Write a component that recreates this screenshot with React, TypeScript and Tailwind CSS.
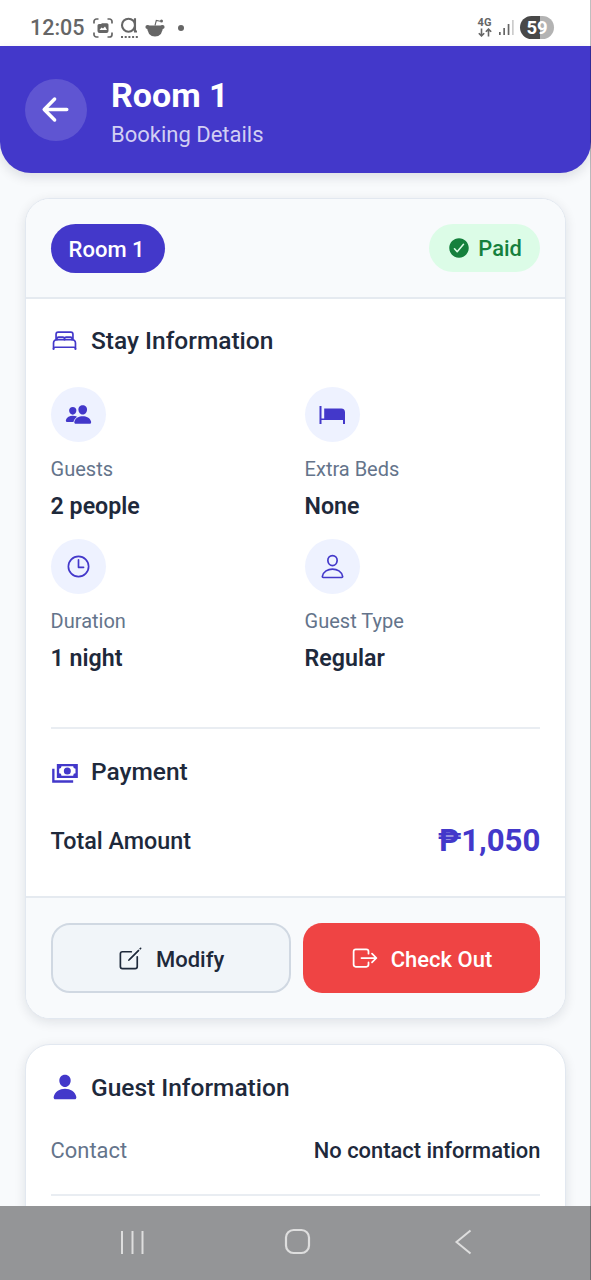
import type { ReactNode } from 'react';
import {
  IoArrowBack,
  IoBedOutline,
  IoCheckmarkCircle,
  IoCreateOutline,
  IoExitOutline,
  IoPeople,
  IoPerson,
  IoPersonOutline,
  IoTimeOutline,
} from 'react-icons/io5';

function BedIcon() {
  return (
    <svg width="28" height="28" viewBox="0 0 28 28" fill="currentColor">
      <path d="M1.5 5h2v12.500h21.500V11a2.800 2.800 0 0 1 2 2.800V23h-2v-4H3.500v4h-2z" />
      <path d="M6.200 7.500h17a3.800 3.800 0 0 1 3.800 3.800v6.700H6.200z" />
    </svg>
  );
}

function CashIcon() {
  return (
    <svg width="28" height="28" viewBox="0 0 24 24" fill="currentColor">
      <path d="M5 6h18v12H5V6m9 3a3 3 0 0 1 3 3 3 3 0 0 1-3 3 3 3 0 0 1-3-3 3 3 0 0 1 3-3M9 8a2 2 0 0 1-2 2v4a2 2 0 0 1 2 2h10a2 2 0 0 1 2-2v-4a2 2 0 0 1-2-2H9m-8 2h2v10h16v2H1V10z" />
    </svg>
  );
}

function StatusBar() {
  return (
    <div className="flex h-[46px] items-center bg-white pt-[9px] pr-[37px] pl-[30px] text-[#666]">
      <span className="w-[63px] text-[21.500px] leading-none font-medium whitespace-nowrap">12:05</span>
      <svg width="20" height="20" viewBox="0 0 20 20" fill="none" stroke="currentColor" strokeWidth="1.700">
        <path d="M1 5.500V3.500A2.500 2.500 0 0 1 3.500 1H5.500M14.500 1h2A2.500 2.500 0 0 1 19 3.500V5.500M19 14.500v2a2.500 2.500 0 0 1-2.500 2.500H14.500M5.500 19H3.500A2.500 2.500 0 0 1 1 16.500V14.500" />
        <path d="M4.500 7.500q0-1.500 1.500-1.500h2l1-.8h5q1.500 0 1.500 1.500v6.300q0 2-2 2h-7q-2 0-2-2z" fill="currentColor" stroke="none" />
        <path d="M6.500 12l2-2.500 1.500 1 2-2 2 3.500z" fill="#fff" stroke="none" />
      </svg>
      <svg className="ml-[7px]" width="19" height="22" viewBox="0 0 19 22" fill="none" stroke="currentColor" strokeWidth="2.100">
        <circle cx="8.500" cy="8.200" r="6.500" />
        <path d="M15 1.200v13.300h2" />
        <path d="M1 20h17" strokeDasharray="2 1.700" />
      </svg>
      <svg className="ml-[6px]" width="20" height="19" viewBox="0 0 20 19" fill="currentColor">
        <path d="M2 7.500h16q0 11-8 11T2 7.500z" />
        <circle cx="2.500" cy="9" r="2.100" />
        <circle cx="17.500" cy="9" r="2.100" />
        <circle cx="16.500" cy="3" r="1.500" />
        <path d="M10 7.500l1.300-5 4 .7" fill="none" stroke="currentColor" strokeWidth="1.100" />
      </svg>
      <span className="ml-[13px] h-[6px] w-[6px] rounded-full bg-[#666]" />

      <div className="ml-auto flex w-[15px] flex-col items-center">
        <span className="text-[11px] leading-[10px] font-bold">4G</span>
        <svg width="14" height="9" viewBox="0 0 14 9" fill="none" stroke="currentColor" strokeWidth="1.600">
          <path d="M3.500.5v7.300M.8 5.200l2.700 2.700 2.700-2.700M10.500 8.500V1.200M7.800 3.800l2.700-2.700 2.700 2.700" />
        </svg>
      </div>
      <svg className="ml-[7px]" width="15" height="17" viewBox="0 0 15 17" fill="currentColor">
        <path d="M0 13h1.700v3H0zM4.300 9H6v7H4.300zM8.700 5h1.700v11H8.700z" />
        <path d="M13 1h1.700v15H13z" fill="#ccc" />
      </svg>
      <span className="ml-[6px] flex h-[23px] w-[34px] items-center justify-center rounded-full bg-linear-to-r from-[#484848] from-[58%] to-[#b3b3b3] to-[58%] pt-px text-[18.500px] leading-none font-bold text-white">
        59
      </span>
    </div>
  );
}

function Header() {
  return (
    <header className="flex h-[127px] items-center rounded-b-[31px] bg-[#4338ca] pl-[24.600px] text-white shadow-[0_4px_12px_rgba(15,23,42,0.12)]">
      <button
        type="button"
        aria-label="Back"
        className="flex h-[62px] w-[62px] items-center justify-center rounded-full bg-white/15"
      >
        <IoArrowBack size={37} className="mr-[1px]" />
      </button>
      <div className="ml-[24.400px] pt-[9px]">
        <h1 className="text-[34px] leading-[42px] font-bold">Room 1</h1>
        <p className="h-[38px] text-[22px] leading-[37px] text-[#d2cff3]">Booking Details</p>
      </div>
    </header>
  );
}

function SectionTitle({ icon, children }: { icon: ReactNode; children: string }) {
  return (
    <h2 className="flex h-[30px] items-center text-[24.500px] leading-[30px] font-medium text-[#1e293b]">
      <span className="-mt-[2px] w-[40.400px] text-[#4338ca]">{icon}</span>
      {children}
    </h2>
  );
}

function Detail({ icon, label, value }: { icon: ReactNode; label: string; value: string }) {
  return (
    <div className="h-[152px]">
      <div className="flex h-[55px] w-[55px] items-center justify-center rounded-full bg-[#eef2ff] text-[#4338ca]">
        {icon}
      </div>
      <p className="mt-[12px] text-[20px] leading-[30px] text-[#64748b]">{label}</p>
      <p className="mt-[6px] text-[23.200px] leading-[32px] font-semibold text-[#1e293b]">{value}</p>
    </div>
  );
}

function BookingCard() {
  return (
    <section className="mx-[25px] mt-[25px] h-[821px] overflow-hidden rounded-[25px] border-[1.500px] border-[#e2e8f0] bg-white shadow-[0_3px_12px_rgba(15,23,42,0.11)]">
      <div className="flex h-[100px] items-center justify-between border-b-2 border-[#e5eaf0] bg-[#f8fafc] px-[24.600px]">
        <span className="flex h-[49px] w-[114px] items-center justify-center rounded-full bg-[#4338ca] pt-[2px] pr-[2px] text-[22px] font-medium text-white">
          Room 1
        </span>
        <span className="flex h-[48px] w-[111.500px] items-center justify-center gap-[7px] rounded-full bg-[#dcfce7] text-[21.900px] font-medium text-[#15803d]">
          <IoCheckmarkCircle size={24} />
          <span className="pt-[2px]">Paid</span>
        </span>
      </div>

      <div className="h-[599px] border-b-2 border-[#e5eaf0] px-[24.600px] pt-[27px]">
        <SectionTitle icon={<IoBedOutline size={27} />}>Stay Information</SectionTitle>
        <div className="mt-[31px] grid grid-cols-[254px_1fr]">
          <Detail icon={<IoPeople size={27} />} label="Guests" value="2 people" />
          <Detail icon={<BedIcon />} label="Extra Beds" value="None" />
          <Detail icon={<IoTimeOutline size={27} />} label="Duration" value="1 night" />
          <Detail icon={<IoPersonOutline size={27} />} label="Guest Type" value="Regular" />
        </div>
        <div className="mt-[36px] border-t-2 border-[#e9edf2] pt-[28px]">
          <SectionTitle icon={<CashIcon />}>Payment</SectionTitle>
          <div className="mt-[35px] flex h-[38px] items-center justify-between">
            <span className="text-[23.300px] font-medium text-[#1e293b]">Total Amount</span>
            <span className="pt-px text-[31.200px] font-bold text-[#4338ca]">₱1,050</span>
          </div>
        </div>
      </div>

      <div className="flex h-[120px] gap-[12px] bg-[#f8fafc] px-[24.600px] pt-[25px] text-[22px] font-medium">
        <button
          type="button"
          className="flex h-[70px] w-[240px] items-center justify-center gap-[12px] rounded-[19px] border-2 border-[#d0d8e2] bg-[#f1f5f9] text-[#1e293b]"
        >
          <IoCreateOutline size={27} />
          <span className="pt-[2px]">Modify</span>
        </button>
        <button
          type="button"
          className="flex h-[70px] flex-1 items-center justify-center gap-[12px] rounded-[19px] bg-[#ef4444] text-white"
        >
          <IoExitOutline size={28} />
          <span className="pt-[2px]">Check Out</span>
        </button>
      </div>
    </section>
  );
}

function GuestCard() {
  return (
    <section className="mx-[25px] mt-[25px] h-[260px] rounded-[25px] border-[1.500px] border-[#e2e8f0] bg-white px-[24.600px] pt-[28px] shadow-[0_3px_12px_rgba(15,23,42,0.11)]">
      <SectionTitle icon={<IoPerson size={28} />}>Guest Information</SectionTitle>
      <div className="mt-[17px] flex h-[76px] items-center justify-between border-b-2 border-[#e9edf2] pb-[11px]">
        <span className="text-[21.900px] text-[#64748b]">Contact</span>
        <span className="text-[21.900px] font-medium text-[#1e293b]">No contact information</span>
      </div>
    </section>
  );
}

function NavigationBar() {
  return (
    <nav className="flex h-[74px] shrink-0 items-center bg-[#949597] pb-[3px] text-[#dedede]">
      <svg className="ml-[120px]" width="25" height="26" viewBox="0 0 25 26" fill="none" stroke="currentColor" strokeWidth="2">
        <path d="M2 2v23M12.500 2v23M22.500 2v23" />
      </svg>
      <svg className="ml-[139px]" width="27" height="27" viewBox="0 0 27 27" fill="none" stroke="currentColor" strokeWidth="2.200">
        <rect x="2" y="2" width="23" height="23" rx="7.500" />
      </svg>
      <svg className="ml-[143px]" width="19" height="26" viewBox="0 0 19 26" fill="none" stroke="currentColor" strokeWidth="2">
        <path d="M16.500 1.500L2.500 13l14 11.500" />
      </svg>
    </nav>
  );
}

export default function App() {
  return (
    <div className="relative flex h-[1280px] w-[591px] flex-col overflow-hidden bg-[#f8fafc] font-[Roboto,sans-serif]">
      <div className="h-[1206px] shrink-0 overflow-hidden">
        <StatusBar />
        <Header />
        <BookingCard />
        <GuestCard />
      </div>
      <NavigationBar />
      {/* hairline at the screen edge */}
      <div className="absolute inset-y-0 right-0 w-px bg-black/25" />
    </div>
  );
}
